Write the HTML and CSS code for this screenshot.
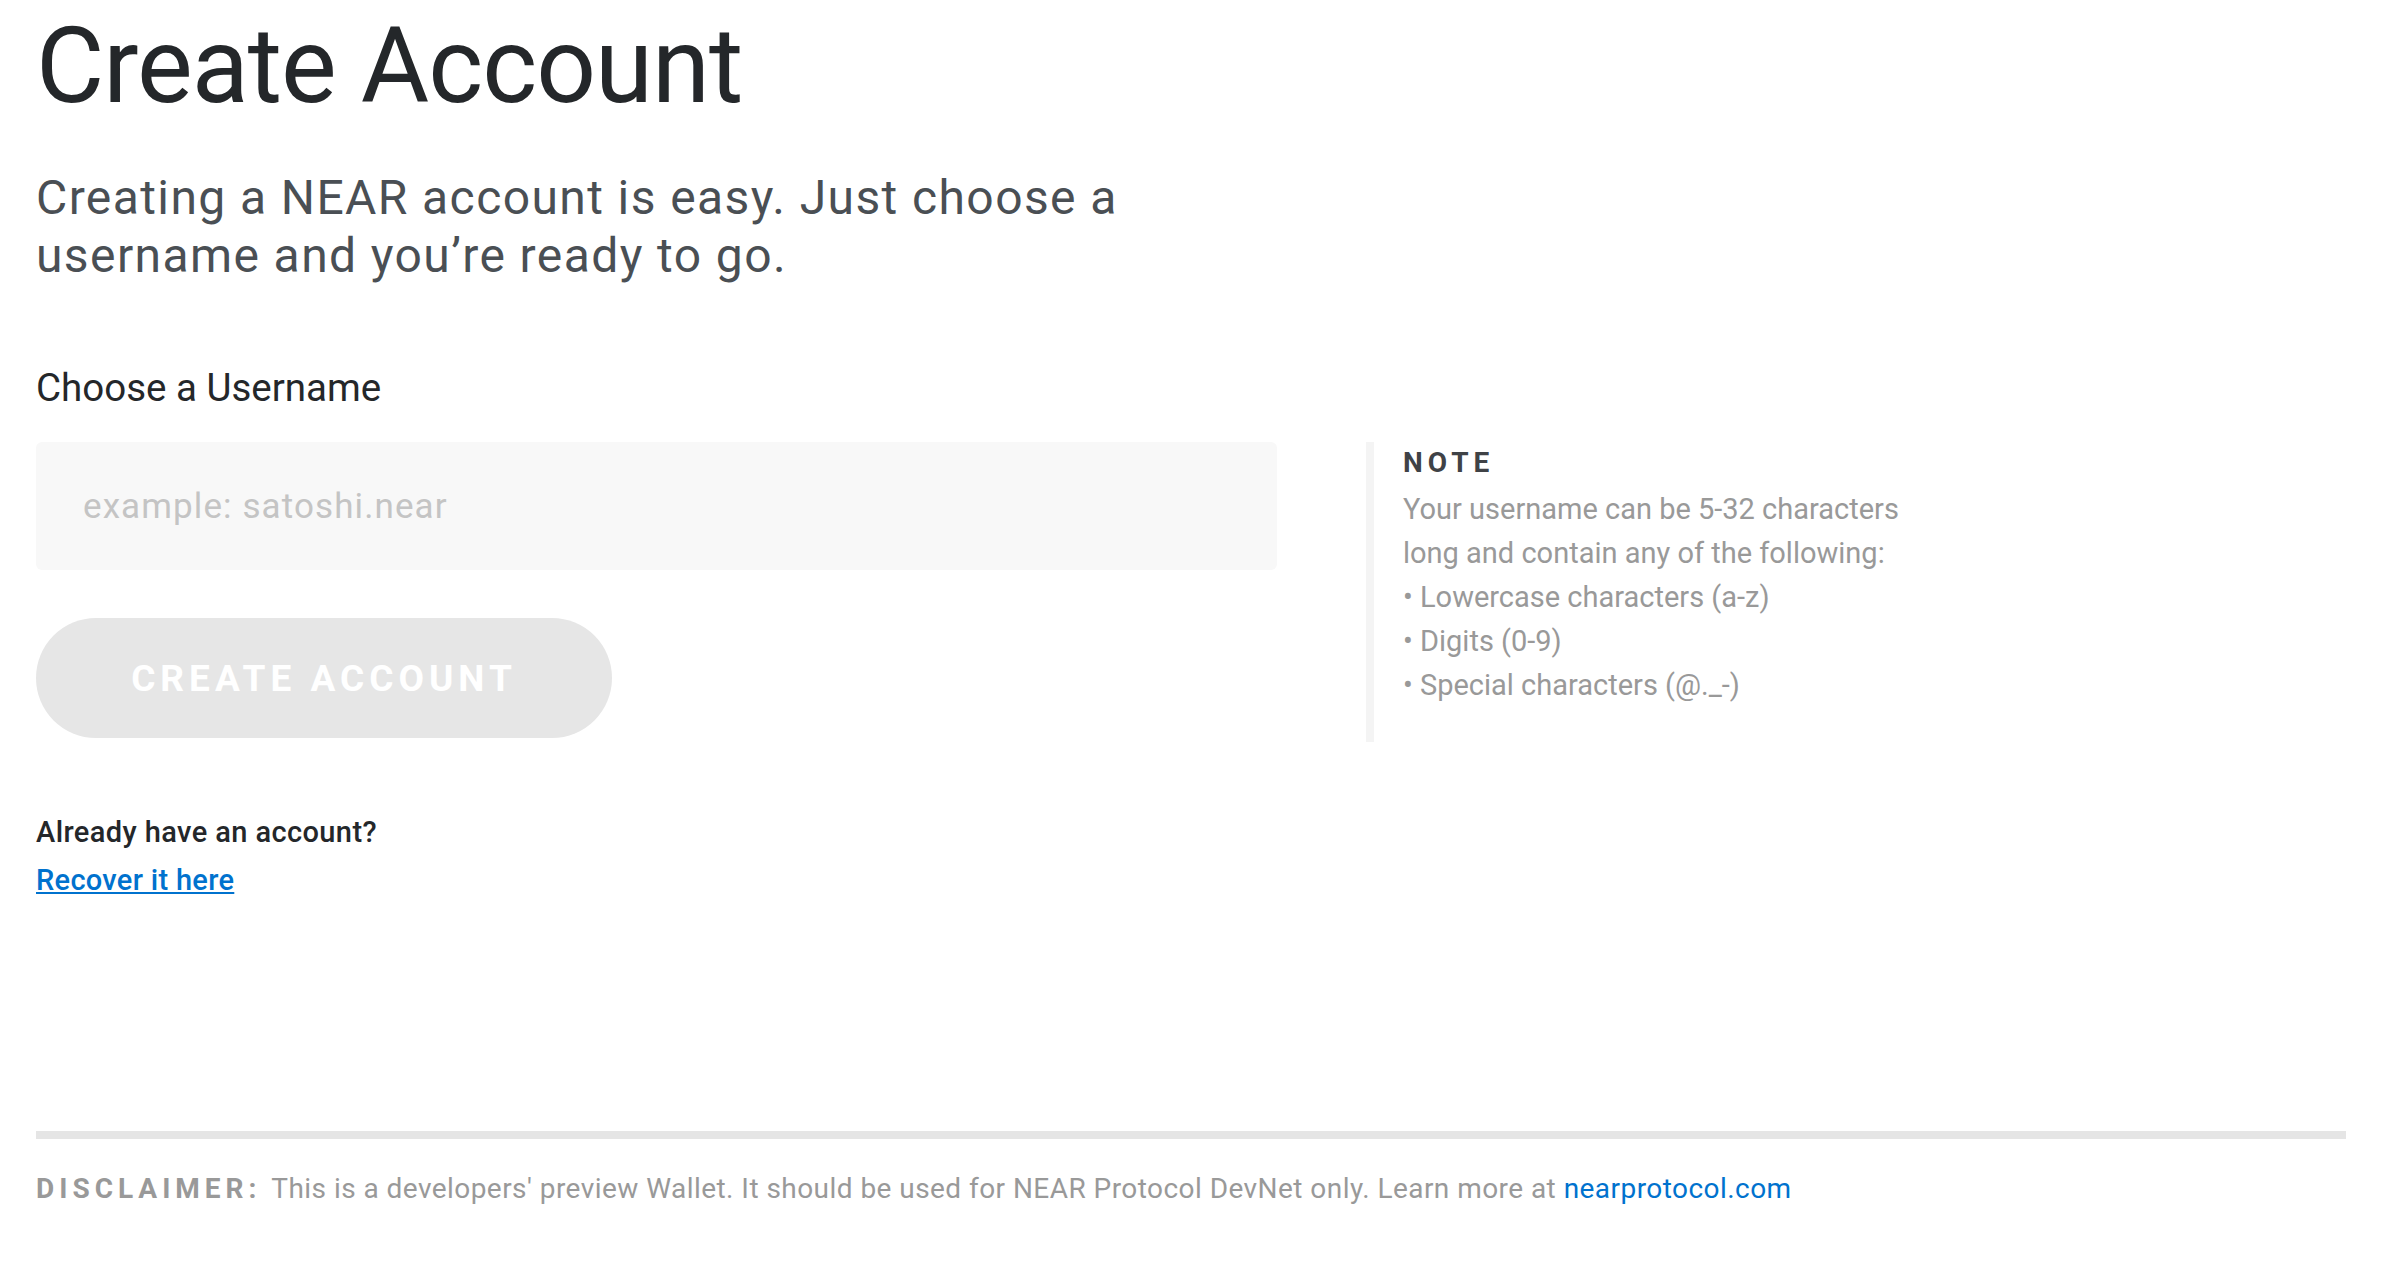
FILE: index.html
```html
<!DOCTYPE html>
<html lang="en">
<head>
<meta charset="utf-8">
<title>Create Account</title>
<link rel="stylesheet" href="styles.css">
</head>
<body>
<main class="page">
  <h1 class="title">Create Account</h1>
  <p class="intro">Creating a NEAR account is easy. Just choose a username and you’re ready to go.</p>

  <h2 class="label">Choose a Username</h2>
  <div class="form-row">
    <div class="form-col">
      <input class="username" type="text" placeholder="example: satoshi.near">
      <button class="create-btn" type="button" disabled>CREATE ACCOUNT</button>
    </div>
    <aside class="note">
      <h3 class="note-title">NOTE</h3>
      <p class="note-text">Your username can be 5-32 characters long and contain any of the following:</p>
      <ul class="note-list">
        <li>• Lowercase characters (a-z)</li>
        <li>• Digits (0-9)</li>
        <li>• Special characters (@._-)</li>
      </ul>
    </aside>
  </div>

  <div class="recover">
    <div class="recover-q">Already have an account?</div>
    <a class="recover-link" href="#">Recover it here</a>
  </div>

  <footer class="footer">
    <span class="disc-label">DISCLAIMER:</span>
    <span class="disc-text">This is a developers' preview Wallet. It should be used for NEAR Protocol DevNet only. Learn more at <a class="disc-link" href="#">nearprotocol.com</a></span>
  </footer>
</main>
</body>
</html>
```

FILE: styles.css
```css
html, body {
  margin: 0;
  padding: 0;
  background: #ffffff;
}

body {
  font-family: Roboto, "Liberation Sans", sans-serif;
  color: #24272a;
}

.page {
  padding: 0 38px 0 36px;
}

.title {
  margin: 14px 0 0 0;
  font-size: 105px;
  line-height: 105px;
  font-weight: 400;
  color: #24272a;
  letter-spacing: -1px;
}

.intro {
  margin: 50px 0 0 0;
  max-width: 1150px;
  font-size: 48px;
  line-height: 58px;
  color: #4a4f54;
  letter-spacing: 1.4px;
}

.label {
  margin: 80px 0 0 0;
  font-size: 38.5px;
  line-height: 46px;
  font-weight: 400;
  color: #24272a;
  letter-spacing: 0;
}

.form-row {
  display: flex;
  align-items: stretch;
  margin-top: 31px;
  gap: 89px;
}

.form-col {
  width: 1241px;
  display: flex;
  flex-direction: column;
  align-items: flex-start;
}

.username {
  box-sizing: border-box;
  width: 100%;
  height: 128px;
  border: none;
  border-radius: 6px;
  background: #f8f8f8;
  padding: 0 47px;
  font-family: Roboto, "Liberation Sans", sans-serif;
  font-size: 35px;
  letter-spacing: 1.1px;
  color: #24272a;
  outline: none;
}

.username::placeholder {
  color: #c4c4c4;
}

.create-btn {
  margin-top: 48px;
  width: 576px;
  height: 120px;
  border: none;
  border-radius: 60px;
  background: #e6e6e6;
  color: #ffffff;
  font-family: Roboto, "Liberation Sans", sans-serif;
  font-size: 37px;
  font-weight: 700;
  letter-spacing: 5px;
  padding: 0;
}

.note {
  box-sizing: border-box;
  border-left: 8px solid #f4f4f4;
  padding: 0 0 0 29px;
  min-height: 300px;
}

.note-title {
  margin: 4px 0 0 0;
  font-size: 28px;
  line-height: 34px;
  font-weight: 700;
  letter-spacing: 5px;
  color: #3f4246;
}

.note-text {
  margin: 7px 0 0 0;
  width: 520px;
  font-size: 29px;
  line-height: 44px;
  color: #999999;
}

.note-list {
  list-style: none;
  margin: 0;
  padding: 0;
  font-size: 29px;
  line-height: 44px;
  color: #999999;
}

.recover {
  margin-top: 66px;
}

.recover-q {
  font-size: 29px;
  line-height: 48px;
  font-weight: 500;
  letter-spacing: 0.4px;
  color: #24272a;
}

.recover-link {
  font-size: 29px;
  line-height: 48px;
  font-weight: 500;
  letter-spacing: 0.3px;
  color: #0072ce;
  text-decoration: underline;
}

.footer {
  margin-top: 227px;
  border-top: 8px solid #e5e5e5;
  padding-top: 30px;
  font-size: 28px;
  line-height: 40px;
  letter-spacing: 0.45px;
  color: #999999;
}

.disc-label {
  font-weight: 700;
  letter-spacing: 5px;
  margin-right: 3px;
}

.disc-link {
  color: #0072ce;
  text-decoration: none;
}
```
